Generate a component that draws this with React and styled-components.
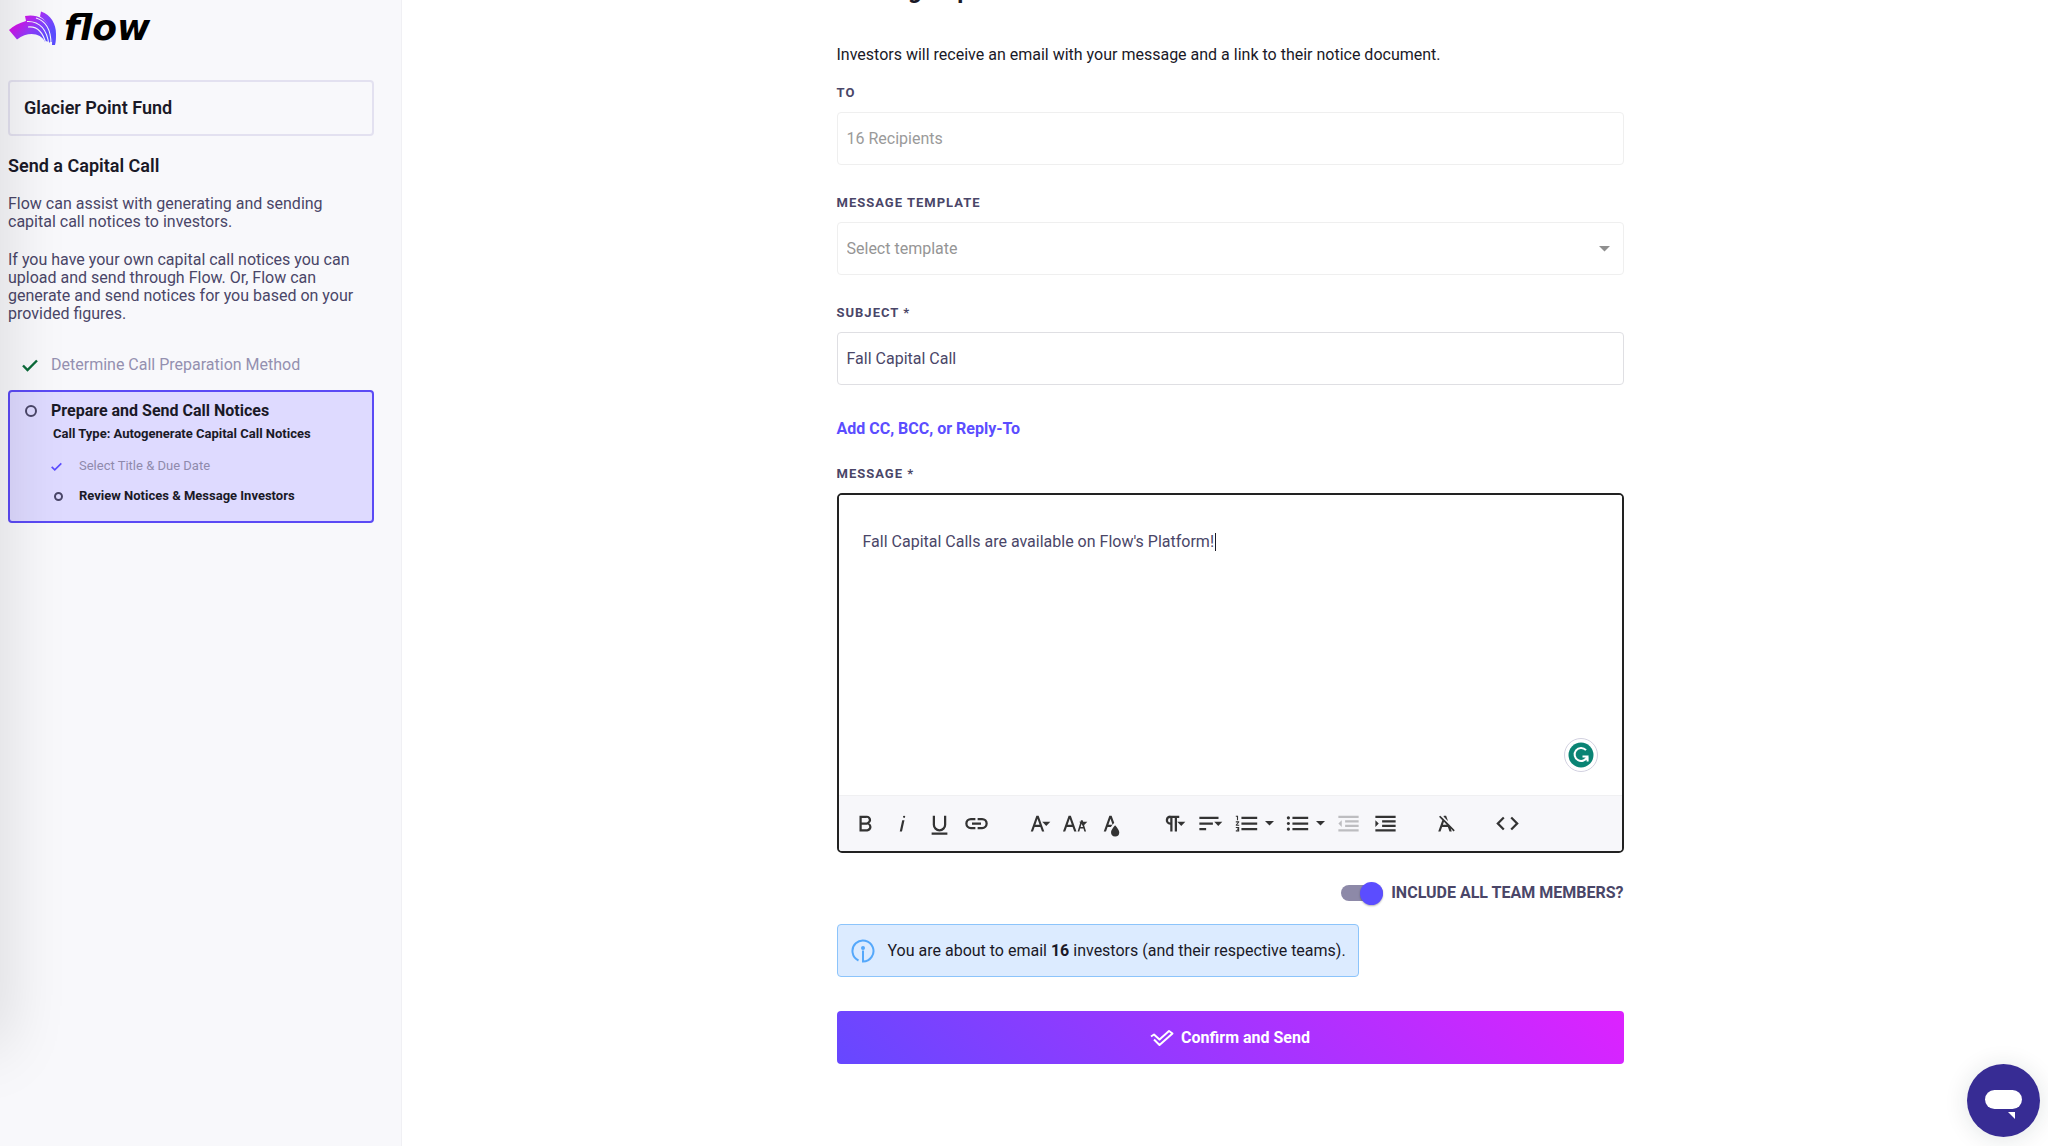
import React, { useState } from 'react'
import styled, { createGlobalStyle } from 'styled-components'

const GlobalStyle = createGlobalStyle`
  * {
    box-sizing: border-box;
  }

  body {
    margin: 0;
    background: #fff;
    color: #1a1927;
    font-family: Roboto, 'Liberation Sans', sans-serif;
    font-size: 16px;
    line-height: 20px;
  }

  button, input, select, textarea {
    font: inherit;
    color: inherit;
  }
`

const Page = styled.div`
  display: grid;
  grid-template-columns: 402px 1fr;
  min-height: 100vh;
`

const Sidebar = styled.aside`
  position: relative;
  overflow: hidden;
  padding: 8px 27px 24px 8px;
  background: #f8f8fb;
  border-right: 1px solid #f0f0f4;
`

const DrawerShadow = styled.div`
  position: absolute;
  z-index: 1;
  top: -100px;
  bottom: 100px;
  left: -40px;
  width: 40px;
  box-shadow: 0 0 64px rgba(0, 0, 0, 0.17);
  pointer-events: none;
`

const Logo = styled.a`
  display: flex;
  align-items: center;
  gap: 7px;
  height: 40px;
  color: #000;
  text-decoration: none;
`

const LogoText = styled.span`
  font-family: 'DejaVu Sans', sans-serif;
  font-size: 36px;
  font-style: italic;
  font-weight: 700;
  line-height: 40px;
`

const FundBox = styled.div`
  margin-top: 32px;
  padding: 14px;
  border: 2px solid #e3e1f0;
  border-radius: 4px;
  font-size: 18px;
  font-weight: 600;
  line-height: 24px;
`

const SidebarTitle = styled.h2`
  margin: 18px 0 17px;
  font-size: 18px;
  font-weight: 600;
  line-height: 24px;
`

const SidebarText = styled.p`
  margin: 0 0 20px;
  color: #4a4668;
  line-height: 18px;
`

const Steps = styled.ol`
  margin: 32px 0 0;
  padding: 0;
  list-style: none;
`

const Step = styled.li`
  display: grid;
  grid-template-columns: 29px 1fr;
  align-items: center;
  padding-left: 14px;
  color: #9490b0;
`

const ActiveStep = styled.li`
  margin-top: 15px;
  padding: 9px 14px 16px 15px;
  background: #dedaff;
  border: 2px solid #5b4af5;
  border-radius: 4px;
`

const ActiveTitle = styled.div`
  display: grid;
  grid-template-columns: 26px 1fr;
  align-items: center;
  font-weight: 700;
`

const CallType = styled.div`
  margin: 4px 0 0 28px;
  font-size: 13px;
  font-weight: 700;
  line-height: 18px;
`

const SubSteps = styled.ul`
  display: flex;
  flex-direction: column;
  gap: 12px;
  margin: 14px 0 0;
  padding: 0 0 0 26px;
  list-style: none;
`

const SubStep = styled.li`
  display: grid;
  grid-template-columns: 28px 1fr;
  align-items: center;
  color: ${({ $done }) => ($done ? '#8f8aac' : '#1a1927')};
  font-size: 13px;
  font-weight: ${({ $done }) => ($done ? 400 : 700)};
  line-height: 18px;
`

const Ring = styled.span`
  width: ${({ $size }) => $size}px;
  height: ${({ $size }) => $size}px;
  margin-left: ${({ $small }) => ($small ? 3 : 0)}px;
  border: 2px solid #4a4668;
  border-radius: 50%;
`

const Main = styled.main`
  display: flex;
  justify-content: center;
  overflow: hidden;
  padding: 0 24px 60px 34px;
`

const Form = styled.form`
  width: 100%;
  max-width: 787px;
`

const Heading = styled.h1`
  margin: -24px 0 41px;
  font-size: 24px;
  font-weight: 700;
  line-height: 28px;
`

const Intro = styled.p`
  margin: 0 0 19px;
`

const Field = styled.div`
  margin-bottom: 29px;
`

const Label = styled.label`
  display: block;
  margin-bottom: 10px;
  color: #4a4668;
  font-size: 13px;
  font-weight: 700;
  letter-spacing: 1px;
  line-height: 18px;
  text-transform: uppercase;
`

const TextInput = styled.input`
  display: block;
  width: 100%;
  height: 53px;
  padding: 0 9px;
  background: #fff;
  border: 1px solid #dfdfe3;
  border-radius: 4px;
  color: #4a4668;

  &:disabled {
    border-color: #efefef;
    color: #9a9a9a;
  }
`

const SelectWrapper = styled.div`
  display: grid;
  align-items: center;

  > * {
    grid-area: 1 / 1;
  }

  svg {
    justify-self: end;
    margin-right: 14px;
    pointer-events: none;
  }
`

const Select = styled.select`
  width: 100%;
  height: 53px;
  padding: 0 9px;
  appearance: none;
  background: #fff;
  border: 1px solid #efefef;
  border-radius: 4px;
  color: #959595;
`

const LinkButton = styled.button`
  display: block;
  margin: 34px 0 26px;
  padding: 0;
  background: none;
  border: 0;
  color: #5b4dff;
  font-weight: 700;
  cursor: pointer;
`

const Editor = styled.div`
  position: relative;
  overflow: hidden;
  border: 2px solid #222;
  border-radius: 5px;
`

const MessageInput = styled.textarea`
  display: block;
  width: 100%;
  height: 300px;
  padding: 37px 24px;
  border: 0;
  outline: 0;
  resize: none;
  color: #4a4668;
`

const Caret = styled.span`
  position: absolute;
  top: 38px;
  left: 376px;
  width: 1px;
  height: 18px;
  background: #1a1927;
`

const GrammarBadge = styled.button`
  position: absolute;
  right: 24px;
  bottom: 79px;
  display: flex;
  align-items: center;
  justify-content: center;
  width: 34px;
  height: 34px;
  padding: 0;
  background: #fff;
  border: 1px solid #d2d1e0;
  border-radius: 50%;
`

const Toolbar = styled.div`
  display: flex;
  align-items: center;
  gap: 34px;
  height: 56px;
  padding: 0 13px;
  background: #f7f7fa;
  border-top: 1px solid #f0f0f2;
`

const ToolGroup = styled.div`
  display: flex;
  align-items: center;
  gap: 10px;
`

const SplitTool = styled.div`
  display: flex;
  align-items: center;
`

const ToolButton = styled.button`
  display: flex;
  align-items: center;
  justify-content: flex-end;
  width: ${({ $narrow }) => ($narrow ? 14 : 27)}px;
  height: 28px;
  padding: 0;
  background: none;
  border: 0;
  color: #333;

  &:disabled {
    color: #bdbdc0;
  }

  svg {
    flex: none;
    overflow: visible;
    fill: currentColor;
  }
`

const TeamRow = styled.label`
  display: flex;
  align-items: center;
  justify-content: flex-end;
  gap: 8px;
  margin-top: 28px;
  height: 24px;
  color: #4a4668;
  font-weight: 700;
`

const Switch = styled.input`
  display: flex;
  align-items: center;
  justify-content: ${({ checked }) => (checked ? 'flex-end' : 'flex-start')};
  width: 42px;
  height: 16px;
  margin: 0;
  appearance: none;
  background: #8d89a8;
  border-radius: 8px;

  &::before {
    content: '';
    flex: none;
    width: 23px;
    height: 23px;
    background: #5b4dff;
    border-radius: 50%;
    box-shadow: 0 1px 2px rgba(0, 0, 0, 0.3);
  }
`

const Notice = styled.div`
  display: flex;
  align-items: center;
  gap: 13px;
  width: fit-content;
  min-height: 53px;
  margin-top: 19px;
  padding: 0 12px 0 13px;
  background: #dcebff;
  border: 1px solid #8cc4fb;
  border-radius: 4px;
`

const SubmitButton = styled.button`
  display: flex;
  align-items: center;
  justify-content: center;
  gap: 7px;
  width: 100%;
  height: 53px;
  margin-top: 34px;
  background: linear-gradient(45deg, #6648ff, #dd22ff);
  border: 0;
  border-radius: 4px;
  color: #fff;
  font-weight: 700;
  cursor: pointer;
`

const ChatButton = styled.button`
  position: fixed;
  right: 8px;
  bottom: 9px;
  width: 73px;
  height: 73px;
  padding: 0;
  background: #372c94;
  border: 0;
  border-radius: 50%;
  box-shadow: 0 2px 24px rgba(0, 40, 40, 0.12);
`

const caret = 'M16.2 10.4h7.2l-3.6 3.8z'

const icons = {
  bold: 'M15.25,11.8h0A3.68,3.68,0,0,0,17,9a3.93,3.93,0,0,0-3.86-4H6.65V19h7a3.74,3.74,0,0,0,3.7-3.78V15.1A3.64,3.64,0,0,0,15.25,11.8ZM8.65,7h4.2a2.09,2.09,0,0,1,2,1.3,2.09,2.09,0,0,1-1.37,2.61,2.23,2.23,0,0,1-.63.09H8.65Zm4.6,10H8.65V13h4.6a2.09,2.09,0,0,1,2,1.3,2.09,2.09,0,0,1-1.37,2.61A2.23,2.23,0,0,1,13.25,17Z',
  italic: 'M11.76,9h2l-2.2,10h-2Zm1.68-4a1,1,0,1,0,1,1,1,1,0,0,0-1-1Z',
  underline: 'M19,20v2H5V20ZM16,5v8a4,4,0,0,1-8,0V5H6v8a6,6,0,0,0,12,0V5Z',
  link: 'M11,17H7A5,5,0,0,1,7,7h4V9H7a3,3,0,0,0,0,6h4ZM17,7H13V9h4a3,3,0,0,1,0,6H13v2h4A5,5,0,0,0,17,7Zm-1,4H8v2h8Z',
  family: 'M16,19h2L13,5H11L6,19H8l1.433-4h5.134ZM10.15,13,12,7.837,13.85,13Z',
  size: 'M20.75,19h1.5l-3-10h-1.5l-3,10h1.5L17,16.5h3Zm-3.3-4,1.05-3.5L19.55,15Zm-5.7,4h2l-5-14h-2l-5,14h2l1.43-4h5.14ZM5.89,13,7.75,7.84,9.61,13Z',
  color: 'M15.2,13.494s-3.6,3.9-3.6,6.3a3.65,3.65,0,0,0,7.3.1v-.1C18.9,17.394,15.2,13.494,15.2,13.494Zm-1.47-1.357.669-.724L12.1,5h-2l-5,14h2l1.43-4h2.943A24.426,24.426,0,0,1,13.726,12.137ZM11.1,7.8l1.86,5.2H9.244Z',
  paragraph: 'M10.15,5A4.11,4.11,0,0,0,6.08,8.18,4,4,0,0,0,10,13v6h2V7h2V19h2V7h2V5ZM8,9a2,2,0,0,1,2-2v4A2,2,0,0,1,8,9Z',
  align: 'M3,18h6V16H3v2ZM3,6V8H20V6ZM3,13H15V11H3v2Z',
  ordered: 'M2.5,16h2v.5h-1v1h1V18h-2v1h3V15h-3Zm1-7h1V5h-2V6h1Zm-1,2H4.3L2.5,13.1V14h3V13H3.7l1.8-2.1V10h-3Zm5-5V8h14V6Zm0,12h14V16H7.5Zm0-5h14V11H7.5Z',
  bullets: 'M3.9,5.6a1.4,1.4,0,1,0,.01,0ZM3.9,10.6a1.4,1.4,0,1,0,.01,0ZM3.9,15.6a1.4,1.4,0,1,0,.01,0ZM7.5,6V8h14V6Zm0,12h14V16H7.5Zm0-5h14V11H7.5Z',
  outdent: 'M3,12l3,3V9ZM3,19h18V17H3ZM3,7h18V5H3ZM9,11h12V9H9ZM9,15h12V13H9Z',
  indent: 'M3,9v6l3-3ZM3,19h18V17H3ZM3,7h18V5H3ZM9,11h12V9H9ZM9,15h12V13H9Z',
  clear: 'M11.48,10.09l-1.2-1.21L8.8,7.41,6.43,5,5.37,6.1,8.25,9,4.66,19h2l1.43-4h5.14l1.43,4h2l-.89-2.51L18.27,19l1.07-1.06L14.59,13.2ZM8.8,13l.92-2.56L12.27,13Zm.56-7.15L9.66,5h2l1.75,4.9Z',
  code: 'M9.4,16.6,4.8,12,9.4,7.4,8,6,2,12l6,6Zm5.2,0L19.2,12,14.6,7.4,16,6l6,6-6,6Z',
}

function Tool({ name, label, menu, disabled }) {
  return (
    <ToolButton type="button" aria-label={label} disabled={disabled}>
      <svg width="27" height="27" viewBox="0 0 24 24">
        <path d={icons[name]} />
        {menu && <path d={caret} />}
      </svg>
    </ToolButton>
  )
}

function ListTool({ name, label }) {
  return (
    <SplitTool>
      <Tool name={name} label={label} />
      <ToolButton type="button" $narrow aria-label={`${label} styles`}>
        <svg width="9" height="5" viewBox="0 0 9 5">
          <path d="M0 0h9L4.5 4.5z" />
        </svg>
      </ToolButton>
    </SplitTool>
  )
}

function Check({ width, color }) {
  return (
    <svg width={width} height={width} viewBox="0 0 16 16" fill="none" stroke={color} strokeWidth="2.4">
      <path d="M1 8.500l4.500 4.500L15 3.500" />
    </svg>
  )
}

function LogoMark() {
  return (
    <svg width="49" height="36" viewBox="0 0 49 36">
      <defs>
        <linearGradient id="mark" x1="14" y1="8" x2="36" y2="30" gradientUnits="userSpaceOnUse">
          <stop offset="0" stopColor="#d414ea" />
          <stop offset="0.5" stopColor="#8f3cfc" />
          <stop offset="1" stopColor="#5b4dff" />
        </linearGradient>
      </defs>
      <g fill="url(#mark)">
        <path d="M1 20C5 16 11 13 18 11L17 6C28 4 37 8 42 17C44 21 45 26 44 32L42 32L41 33L39 31L37 32C33 23 20 21 9 29.500Z" />
        <path d="M33 1.500C43 5 48 14 48 24C48 28 48 31 47 35H44C45 23 42 13 32 6.500Z" />
      </g>
      <g fill="none" stroke="#f8f8fb" strokeWidth="1.100">
        <path d="M28 8C38 11 43 20 43 34" />
        <path d="M19 11.500C32 11 39 20 41 35" />
        <path d="M20 17C29 16 35 22 38 34" />
      </g>
    </svg>
  )
}

export default function App() {
  const [subject, setSubject] = useState('Fall Capital Call')
  const [message, setMessage] = useState("Fall Capital Calls are available on Flow's Platform!")
  const [includeTeam, setIncludeTeam] = useState(true)

  return (
    <>
      <GlobalStyle />
      <Page>
        <Sidebar>
          <DrawerShadow />
          <Logo href="#">
            <LogoMark />
            <LogoText>flow</LogoText>
          </Logo>
          <FundBox>Glacier Point Fund</FundBox>
          <SidebarTitle>Send a Capital Call</SidebarTitle>
          <SidebarText>Flow can assist with generating and sending capital call notices to investors.</SidebarText>
          <SidebarText>
            If you have your own capital call notices you can upload and send through Flow. Or, Flow can generate and
            send notices for you based on your provided figures.
          </SidebarText>
          <Steps>
            <Step>
              <Check width={16} color="#0b6b3a" />
              Determine Call Preparation Method
            </Step>
            <ActiveStep>
              <ActiveTitle>
                <Ring $size={12} />
                Prepare and Send Call Notices
              </ActiveTitle>
              <CallType>Call Type: Autogenerate Capital Call Notices</CallType>
              <SubSteps>
                <SubStep $done>
                  <Check width={11} color="#5b4dff" />
                  Select Title &amp; Due Date
                </SubStep>
                <SubStep>
                  <Ring $size={9} $small />
                  Review Notices &amp; Message Investors
                </SubStep>
              </SubSteps>
            </ActiveStep>
          </Steps>
        </Sidebar>

        <Main>
          <Form onSubmit={e => e.preventDefault()}>
            <Heading>Message Options</Heading>
            <Intro>Investors will receive an email with your message and a link to their notice document.</Intro>
            <Field>
              <Label htmlFor="to">To</Label>
              <TextInput id="to" value="16 Recipients" disabled readOnly />
            </Field>
            <Field>
              <Label htmlFor="template">Message Template</Label>
              <SelectWrapper>
                <Select id="template" defaultValue="">
                  <option value="">Select template</option>
                </Select>
                <svg width="11" height="6" viewBox="0 0 11 6" fill="#8f8f8f">
                  <path d="M0 0h11L5.5 5.5z" />
                </svg>
              </SelectWrapper>
            </Field>
            <Field>
              <Label htmlFor="subject">Subject *</Label>
              <TextInput id="subject" value={subject} onChange={e => setSubject(e.target.value)} />
            </Field>
            <LinkButton type="button">Add CC, BCC, or Reply-To</LinkButton>
            <Label htmlFor="message">Message *</Label>
            <Editor>
              <MessageInput
                id="message"
                spellCheck={false}
                value={message}
                onChange={e => setMessage(e.target.value)}
              />
              <Caret />
              <GrammarBadge type="button" aria-label="Check writing">
                <svg width="26" height="26" viewBox="0 0 26 26" fill="none">
                  <circle cx="13" cy="13" r="12.5" fill="#0a8474" />
                  <path d="M18 8.200A6.500 6.500 0 1 0 19.300 14.500H14.500M19.600 14.500V19.500" stroke="#fff" strokeWidth="2" />
                </svg>
              </GrammarBadge>
              <Toolbar>
                <ToolGroup>
                  <Tool name="bold" label="Bold" />
                  <Tool name="italic" label="Italic" />
                  <Tool name="underline" label="Underline" />
                  <Tool name="link" label="Insert link" />
                </ToolGroup>
                <ToolGroup>
                  <Tool name="family" label="Font family" menu />
                  <Tool name="size" label="Font size" menu />
                  <Tool name="color" label="Text color" />
                </ToolGroup>
                <ToolGroup>
                  <Tool name="paragraph" label="Paragraph format" menu />
                  <Tool name="align" label="Align" menu />
                  <ListTool name="ordered" label="Ordered list" />
                  <ListTool name="bullets" label="Unordered list" />
                  <Tool name="outdent" label="Decrease indent" disabled />
                  <Tool name="indent" label="Increase indent" />
                </ToolGroup>
                <Tool name="clear" label="Clear formatting" />
                <Tool name="code" label="Code view" />
              </Toolbar>
            </Editor>
            <TeamRow>
              <Switch
                type="checkbox"
                role="switch"
                checked={includeTeam}
                onChange={e => setIncludeTeam(e.target.checked)}
              />
              INCLUDE ALL TEAM MEMBERS?
            </TeamRow>
            <Notice>
              <svg width="24" height="24" viewBox="0 0 24 24" fill="none" stroke="#55a8fb" strokeWidth="2">
                <path d="M7.5 21.5A10.5 10.5 0 1 1 12 22.5V11.5" />
                <circle cx="12" cy="9" r="2" fill="#55a8fb" stroke="none" />
              </svg>
              <span>
                You are about to email <b>16</b> investors (and their respective teams).
              </span>
            </Notice>
            <SubmitButton type="submit">
              <svg width="24" height="18" viewBox="0 0 24 18" fill="none" stroke="#fff" strokeWidth="2">
                <path d="M1 7.500L4 5.500L9.500 10.500L19 2L22.500 4.500L9.500 16L4 10.500" strokeLinejoin="round" />
              </svg>
              Confirm and Send
            </SubmitButton>
          </Form>
        </Main>
      </Page>
      <ChatButton type="button" aria-label="Open chat">
        <svg width="73" height="73" viewBox="0 0 73 73" fill="#fff">
          <rect x="18" y="26" width="37" height="19" rx="9.5" />
          <path d="M41 48h7v7z" />
        </svg>
      </ChatButton>
    </>
  )
}
